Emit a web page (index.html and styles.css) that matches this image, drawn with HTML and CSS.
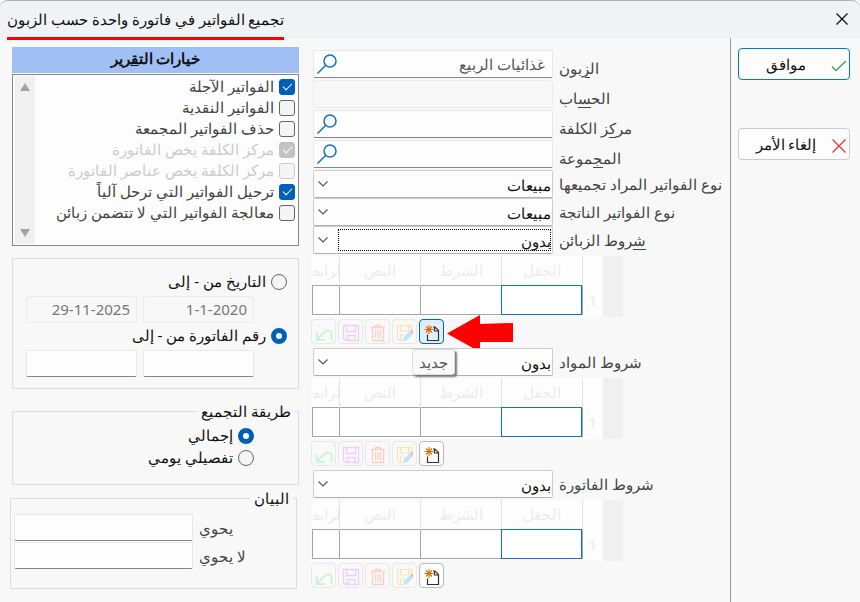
FILE: index.html
```
<!DOCTYPE html>
<html lang="ar" dir="rtl">
<head>
<meta charset="utf-8">
<title>تجميع الفواتير</title>
<link rel="stylesheet" href="styles.css">
</head>
<body>
<svg class="sprite" aria-hidden="true">
  <symbol id="search" viewBox="0 0 20 20"><g fill="none" stroke="#1471bd" stroke-width="1.5"><circle cx="13" cy="7" r="6"/><path d="M8.500 11.500L0.500 19.500"/></g></symbol>
  <symbol id="chevron" viewBox="0 0 10 6"><path d="M.5.5L5 5L9.500.5" fill="none" stroke="#555" stroke-width="1.200"/></symbol>
  <symbol id="new" viewBox="0 0 18 18"><path d="M4.500 10.500v6h11v-10l-3.500-3.500h-2M11.500 3v4h4" fill="none" stroke="#333" stroke-width="1.200"/><path d="M6 1v9M1.500 5.500h9M3 2.500l6 6M9 2.500l-6 6" stroke="#e06c00" stroke-width="1.100"/></symbol>
  <symbol id="edit" viewBox="0 0 18 18"><path d="M8 16.500H3.500L1.500 14.500V1.500H15.500V6M4.500 1.500V7H12.500V1.500M4.500 16V11H9" fill="none" stroke="#fbe3ae" stroke-width="1.200"/><path d="M7 17l1-4l6-6l3 3l-6 6z" fill="#bfe3fb"/><path d="M14 7l1-1h2v3l-1 1z" fill="#f6b9b0"/></symbol>
  <symbol id="trash" viewBox="0 0 18 18"><path d="M2 3.500h14M6.500 3V1.500h5V3M3.500 4v12.500h11V4M6.500 6v8M9 6v8M11.500 6v8" fill="none" stroke="#f9cfc8" stroke-width="1.300"/></symbol>
  <symbol id="save" viewBox="0 0 18 18"><path d="M1.500 1.500h15v15h-13l-2-2zM4.500 1.500v6h9v-6M5 16.500v-5h8v5M7 14v2.500" fill="none" stroke="#f0cdf7" stroke-width="1.300"/></symbol>
  <symbol id="undo" viewBox="0 0 18 18"><path d="M1.800 8v8h8M2 15.500L9.500 8q3.500-3 7 0v8" fill="none" stroke="#cdf3d7" stroke-width="2"/></symbol>
</svg>
<header class="titlebar">
  <button class="close" type="button" aria-label="إغلاق"><svg viewBox="0 0 12 12"><path d="M.5.5l11 11M11.500.5l-11 11" stroke="#111" stroke-width="1.300"/></svg></button>
  <h1>تجميع الفواتير في فاتورة واحدة حسب الزبون</h1>
</header>
<main>
  <aside class="actions">
    <button class="action primary" type="button"><svg viewBox="0 0 16 16"><path d="M1 8.500l4 4L15 3" fill="none" stroke="#3f9e5a" stroke-width="1.300"/></svg><span>موافق</span></button>
    <button class="action" type="button"><svg viewBox="0 0 16 16"><path d="M1.500 1.500l13 13M14.500 1.500l-13 13" stroke="#e0382e" stroke-width="1.300"/></svg><span>إلغاء الأمر</span></button>
  </aside>

  <section class="form">
    <div class="row"><label for="customer">ال<u>ز</u>بون</label><div class="field"><input id="customer" type="text" value="غذائيات الربيع"><svg class="search"><use href="#search"/></svg></div></div>
    <div class="row"><label for="account">الح<u>س</u>اب</label><div class="field"><input id="account" type="text" disabled></div></div>
    <div class="row"><label for="cost">مر<u>ك</u>ز الكلفة</label><div class="field"><input id="cost" type="text"><svg class="search"><use href="#search"/></svg></div></div>
    <div class="row"><label for="group">الم<u>ج</u>موعة</label><div class="field"><input id="group" type="text"><svg class="search"><use href="#search"/></svg></div></div>
    <div class="row pick"><label for="src">نوع الفواتير المراد تجميعها</label><div class="field"><select id="src"><option>مبيعات</option></select><svg class="chevron"><use href="#chevron"/></svg></div></div>
    <div class="row pick"><label for="dst">نوع الفواتير الناتجة</label><div class="field"><select id="dst"><option>مبيعات</option></select><svg class="chevron"><use href="#chevron"/></svg></div></div>

    <div class="row pick"><label for="c1"><u>ش</u>روط الزبائن</label><div class="field focused"><select id="c1"><option>بدون</option></select><svg class="chevron"><use href="#chevron"/></svg></div></div>
    <div class="conditions">
      <div class="sheet"><table>
        <thead><tr><td></td><th>الحقل</th><th>الشرط</th><th>النص</th><th class="link"><span>الرابط</span></th></tr></thead>
        <tbody><tr><th>1</th><td class="current"></td><td></td><td></td><td></td></tr></tbody>
      </table></div>
      <div class="tools">
        <button class="on hot" type="button" aria-label="جديد"><svg><use href="#new"/></svg></button>
        <button type="button" disabled aria-label="تعديل"><svg><use href="#edit"/></svg></button>
        <button type="button" disabled aria-label="حذف"><svg><use href="#trash"/></svg></button>
        <button type="button" disabled aria-label="حفظ"><svg><use href="#save"/></svg></button>
        <button type="button" disabled aria-label="تراجع"><svg><use href="#undo"/></svg></button>
        <svg class="arrow" viewBox="0 0 66 37"><path d="M0 18.500L33 0V9L66 8V27H33V37Z" fill="#f00"/></svg>
        <div class="tip" role="tooltip">جديد</div>
      </div>
    </div>

    <div class="row pick"><label for="c2">شروط المواد</label><div class="field"><select id="c2"><option>بدون</option></select><svg class="chevron"><use href="#chevron"/></svg></div></div>
    <div class="conditions">
      <div class="sheet"><table>
        <thead><tr><td></td><th>الحقل</th><th>الشرط</th><th>النص</th><th class="link"><span>الرابط</span></th></tr></thead>
        <tbody><tr><th>1</th><td class="current"></td><td></td><td></td><td></td></tr></tbody>
      </table></div>
      <div class="tools">
        <button class="on" type="button" aria-label="جديد"><svg><use href="#new"/></svg></button>
        <button type="button" disabled aria-label="تعديل"><svg><use href="#edit"/></svg></button>
        <button type="button" disabled aria-label="حذف"><svg><use href="#trash"/></svg></button>
        <button type="button" disabled aria-label="حفظ"><svg><use href="#save"/></svg></button>
        <button type="button" disabled aria-label="تراجع"><svg><use href="#undo"/></svg></button>
      </div>
    </div>

    <div class="row pick"><label for="c3">شروط الفاتورة</label><div class="field"><select id="c3"><option>بدون</option></select><svg class="chevron"><use href="#chevron"/></svg></div></div>
    <div class="conditions">
      <div class="sheet"><table>
        <thead><tr><td></td><th>الحقل</th><th>الشرط</th><th>النص</th><th class="link"><span>الرابط</span></th></tr></thead>
        <tbody><tr><th>1</th><td class="current"></td><td></td><td></td><td></td></tr></tbody>
      </table></div>
      <div class="tools">
        <button class="on" type="button" aria-label="جديد"><svg><use href="#new"/></svg></button>
        <button type="button" disabled aria-label="تعديل"><svg><use href="#edit"/></svg></button>
        <button type="button" disabled aria-label="حذف"><svg><use href="#trash"/></svg></button>
        <button type="button" disabled aria-label="حفظ"><svg><use href="#save"/></svg></button>
        <button type="button" disabled aria-label="تراجع"><svg><use href="#undo"/></svg></button>
      </div>
    </div>
  </section>

  <section class="options">
    <h2>خيارات الت<u>ق</u>رير</h2>
    <div class="list">
      <div class="checks">
        <label><input type="checkbox" checked><span>الفواتير الآجلة</span></label>
        <label><input type="checkbox"><span>الفواتير النقدية</span></label>
        <label><input type="checkbox"><span>حذف الفواتير المجمعة</span></label>
        <label class="off"><input type="checkbox" checked disabled><span>مركز الكلفة يخص الفاتورة</span></label>
        <label class="off"><input type="checkbox" disabled><span>مركز الكلفة يخص عناصر الفاتورة</span></label>
        <label><input type="checkbox" checked><span>ترحيل الفواتير التي ترحل آلياً</span></label>
        <label><input type="checkbox"><span>معالجة الفواتير التي لا تتضمن زبائن</span></label>
      </div>
      <div class="scroll"><svg viewBox="0 0 10 8"><path d="M5 0L10 8H0Z" fill="#a3a3a3"/></svg><svg viewBox="0 0 10 8"><path d="M5 8L10 0H0Z" fill="#a3a3a3"/></svg></div>
    </div>

    <div class="box range">
      <label><input type="radio" name="range"><span>التاريخ من - إلى</span></label>
      <div class="pair"><input type="text" value="1-1-2020" disabled aria-label="من تاريخ"><input type="text" value="29-11-2025" disabled aria-label="إلى تاريخ"></div>
      <label><input type="radio" name="range" checked><span>رقم الفاتورة من - إلى</span></label>
      <div class="pair"><input type="text" aria-label="من رقم"><input type="text" aria-label="إلى رقم"></div>
    </div>

    <fieldset class="box method">
      <legend>طريقة التجميع</legend>
      <label><input type="radio" name="method" checked><span>إجمالي</span></label>
      <label><input type="radio" name="method"><span>تفصيلي يومي</span></label>
    </fieldset>

    <fieldset class="box notes">
      <legend>الب<u>ي</u>ان</legend>
      <div class="note"><label for="has">يحوي</label><input id="has" type="text"></div>
      <div class="note"><label for="hasnot">لا يحوي</label><input id="hasnot" type="text"></div>
    </fieldset>
  </section>
</main>
</body>
</html>
```
FILE: styles.css
```
* { box-sizing: border-box; }

body {
  margin: 0;
  min-height: 100vh;
  display: flex;
  flex-direction: column;
  background: #f8f8f8;
  color: #111;
  font: 15px/20px "Noto Sans", "Open Sans", sans-serif;
}

input, select, button { font: inherit; color: inherit; margin: 0; }
.sprite { position: absolute; width: 0; height: 0; }

.titlebar {
  display: flex;
  justify-content: space-between;
  align-items: flex-start;
  height: 38px;
  padding: 0 12px 0 7px;
  border-top: 1px solid #b4b4b8;
  border-radius: 8px 8px 0 0;
  background: #f0f3f5;
}
.titlebar h1 {
  margin: 0;
  padding: 8px 0;
  border-bottom: 3px solid #f00;
  font-size: 15px;
  font-weight: 400;
  white-space: nowrap;
}
.close { padding: 12px 0; border: 0; background: none; line-height: 0; }
.close svg { width: 12px; height: 12px; }

main { flex: 1; display: flex; }

.actions {
  display: flex;
  flex-direction: column;
  gap: 48px;
  width: 130px;
  padding: 10px 10px 0 7px;
  border-left: 1px solid #999;
}
.action {
  display: flex;
  align-items: center;
  height: 32px;
  padding: 0 2px;
  border: 1px solid #ccc;
  border-radius: 4px;
  background: #fdfdfd;
}
.action svg { width: 16px; height: 16px; margin-top: 4px; }
.action span { flex: 1; text-align: center; }
.action.primary { border-color: #0078d4; }

.form { flex: 1; padding: 12px 0 0 12px; }
.row { display: flex; height: 30px; padding-left: 2px; }
.row.pick { height: 28px; }
.row > label {
  flex: 1;
  padding: 8px 0 0 6px;
  color: #444;
  text-align: left;
  white-space: nowrap;
}
.row.pick > label { padding-top: 4px; }
.row u { text-underline-offset: 3px; }
.field { position: relative; width: 240px; }
.field input, .field select {
  width: 100%;
  height: 28px;
  padding: 0 7px 1px;
  border: 1px solid #e8e8e8;
  border-bottom-color: #868686;
  border-radius: 2px;
  background: #fdfdfd;
  color: #555;
}
.field input:disabled { border-color: #ececec; background: #f8f8f8; }
.field select {
  appearance: none;
  padding: 2px 1px 0 26px;
  border-color: #ccc;
  border-bottom-color: #b0b0b0;
  color: #111;
}
.search { position: absolute; left: 4px; top: 4px; width: 20px; height: 20px; }
.chevron { position: absolute; left: 5px; top: 11px; width: 10px; height: 6px; pointer-events: none; }
.focused::after {
  content: "";
  position: absolute;
  inset: 3px 2px 3px 25px;
  border: 1px dotted #000;
  pointer-events: none;
}

.conditions { padding: 2px 0 4px; }
.sheet {
  display: flex;
  justify-content: flex-end;
  width: 312px;
  height: 61px;
  margin-right: auto;
  padding-left: 1px;
  border-right: 20px solid #f0f0f0;
  background: #fdfdfd;
}
table { width: 100%; height: 59px; table-layout: fixed; border-collapse: collapse; }
th, td { padding: 0; overflow: hidden; font-weight: 400; color: #ececec; }
thead th { height: 29px; border: 1px solid #e2e2e2; border-width: 0 1px; white-space: nowrap; }
thead td { width: 21px; }
thead .link { width: 27px; border-left: 0; }
.link span { display: block; margin: 0 -6px; text-align: center; }
tbody td { height: 29px; border: 1px solid #a6a6a6; background: #fff; }
tbody .current { outline: 1px solid #1471bd; outline-offset: -1px; }

.tools {
  position: relative;
  display: flex;
  gap: 2px;
  width: 133px;
  margin: 2px auto 0 0;
}
.tools button {
  display: grid;
  place-items: center;
  width: 25px;
  height: 25px;
  padding: 2px 0 0;
  border: 1px solid #e8e8e8;
  border-radius: 4px;
  background: #f9f9f9;
}
.tools button svg { width: 18px; height: 18px; }
.tools .on { border-color: #bbb; background: #fdfdfd; }
.tools .hot { border-color: #0067c0; background: #e0eef9; }
.arrow { position: absolute; left: 136px; top: -4px; width: 66px; height: 37px; }
.tip {
  position: absolute;
  z-index: 1;
  left: 101px;
  top: 30px;
  padding: 2px 6px;
  border: 1px solid #ddd;
  border-radius: 3px;
  background: #f9f9f9;
  box-shadow: 2px 2px 2px #777;
  color: #555;
}

.options { width: 299px; padding: 9px 0 0 12px; }
.options h2 {
  margin: 0 0 1px;
  padding: 1px 0 5px;
  background: #a0bff5;
  font-size: 15px;
  text-align: center;
}
.list {
  display: flex;
  justify-content: space-between;
  height: 172px;
  padding: 1px 2px;
  border: 1px solid #828790;
  background: #fdfdfd;
}
.checks { padding: 0 1px; }
.options label { display: flex; align-items: center; gap: 5px; white-space: nowrap; }
.options label span { padding-bottom: 2px; }
.checks label { height: 21px; color: #444; }
.checks .off { color: #ccc; }
.scroll {
  display: flex;
  flex-direction: column;
  justify-content: space-between;
  align-items: center;
  width: 20px;
  padding: 7px 0;
  background: #f0f0f0;
}
.scroll svg { width: 10px; height: 8px; }

input[type="checkbox"], input[type="radio"] {
  appearance: none;
  display: grid;
  place-items: center;
  width: 16px;
  height: 16px;
  border: 1px solid #666;
  border-radius: 3px;
  background: #f5f5f5;
}
input[type="radio"] { border-radius: 50%; }
input[type="checkbox"]:disabled { border-color: #ccc; }
input[type="checkbox"]:checked { border-color: #005fb8; background: #005fb8; }
input[type="checkbox"]:checked:disabled { border-color: #c3c3c3; background: #c3c3c3; }
input[type="checkbox"]:checked::after {
  content: "";
  width: 8px;
  height: 4px;
  margin-bottom: 2px;
  border: solid #fff;
  border-width: 0 0 1px 1px;
  rotate: -45deg;
}
input[type="radio"]:checked { border: 5px solid #005fb8; background: #fff; }

.box { margin: 12px 0 0; border: 1px solid #dcdcdc; }
.range { height: 131px; padding: 12px 11px 0 13px; }
.range label { height: 21px; }
.pair { display: flex; gap: 6px; margin: 4px 33px 2px 0; }
.pair input, .note input {
  flex: 1;
  min-width: 0;
  height: 27px;
  padding: 0 6px 2px;
  border: 1px solid #e8e8e8;
  border-bottom-color: #868686;
  border-radius: 2px;
  background: #fdfdfd;
}
.pair input:disabled { border-color: #ececec; background: #f8f8f8; color: #777; }
fieldset { min-width: 0; }
legend { padding: 0 4px; }
.method { height: 84px; padding: 4px 44px 0 0; }
.method legend { margin-right: -41px; }
.method label { height: 22px; }
.notes { height: 101px; margin: 3px 2px 0 -2px; padding: 6px 3px 0; }
.note { display: flex; margin-bottom: 1px; }
.note label { flex: 1; justify-content: flex-end; padding-left: 6px; color: #444; }
.note input { flex: 0 0 179px; }
```
